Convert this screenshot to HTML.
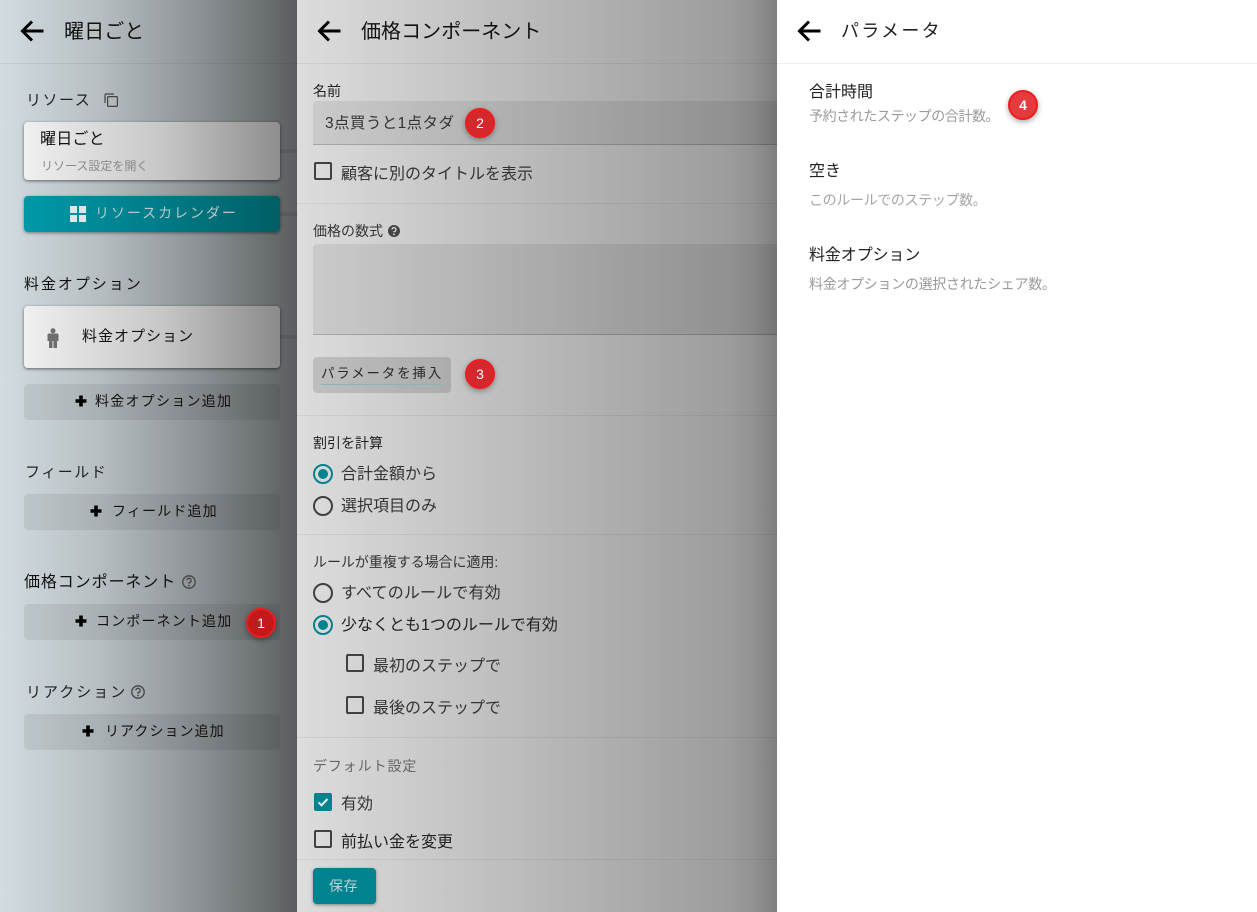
<!DOCTYPE html>
<html lang="ja"><head><meta charset="utf-8"><title>パラメータ</title>
<style>
html,body{margin:0;padding:0;width:1257px;height:912px;overflow:hidden;background:#fff}
body{font-family:"Liberation Sans","Noto Sans CJK JP",sans-serif;position:relative;color:#1a1a1a}
.p{position:absolute;top:0;height:912px;overflow:hidden}
#l{left:0;width:297px;background:linear-gradient(90deg,#d2dde1 0,#b6bec1 100px,#8c9194 200px,#5a5e60 297px)}
#m{left:297px;width:480px;background:linear-gradient(90deg,#dddddd 0,#cbcbcb 120px,#b0b0b0 300px,#9d9d9d 430px,#939393 455px,#7e7e7e 480px)}
#r{left:777px;width:480px;background:#fff}
.t{position:absolute;white-space:nowrap;line-height:1}
.h{height:1px;position:absolute;left:0;right:0;background:rgba(0,0,0,.06)}
.box{position:absolute;border-radius:4px}
.cb{position:absolute;width:14px;height:14px;border:2px solid #404040;border-radius:2px}
.ra{position:absolute;width:16px;height:16px;border:2px solid #404040;border-radius:50%}
.ra.on{border-color:#00838f}
.ra.on:after{content:"";position:absolute;left:3px;top:3px;width:10px;height:10px;background:#00838f;border-radius:50%}
.add{position:absolute;left:24px;width:256px;height:36px;border-radius:4px;background:rgba(0,0,0,.07)}
.n{position:absolute;width:26px;height:26px;border:2px solid #ee1c1c;border-radius:50%;color:#fff;font-size:14px;line-height:26px;text-align:center;box-shadow:0 2px 6px rgba(0,0,0,.35)}
.st{position:absolute;left:280px;width:17px;height:4px;background:rgba(0,0,0,.08)}
svg{position:absolute;display:block}
</style></head><body>

<div class="p" id="l">
<svg style="left:20px;top:19px" width="24" height="24" viewBox="0 0 24 24"><path d="M23.500 12H3M12 2.500L2.500 12l9.500 9.500" fill="none" stroke="#000" stroke-width="3"/></svg>
<div class="t" style="left:64px;top:22px;font-size:20px;letter-spacing:.1px;color:#111">曜日ごと</div>
<div class="h" style="top:63px"></div>
<div class="t" style="left:26px;top:93px;font-size:15px;letter-spacing:1.500px;color:#222">リソース</div>
<svg style="left:103px;top:92px" width="16" height="16" viewBox="0 0 16 16" fill="none" stroke="#444" stroke-width="1.200"><path d="M2 11V3a1 1 0 0 1 1-1h8"/><rect x="4.600" y="4.600" width="9.800" height="9.800" rx="1"/></svg>

<div class="st" style="top:149px"></div>
<div class="st" style="top:212px"></div>
<div class="st" style="top:335px"></div>

<div class="box" style="left:24px;top:122px;width:256px;height:58px;background:linear-gradient(90deg,#f0f0f0,#c6c6c6 55%,#8e8e8e);box-shadow:0 1px 3px rgba(0,0,0,.55)"></div>
<div class="t" style="left:40px;top:132px;font-size:16px;letter-spacing:.2px;color:#111">曜日ごと</div>
<div class="t" style="left:41px;top:160px;font-size:12px;color:#8a8a8a">リソース設定を開く</div>

<div class="box" style="left:24px;top:196px;width:256px;height:36px;background:linear-gradient(90deg,#0098a8,#007e8a 50%,#005e64);box-shadow:0 1px 3px rgba(0,0,0,.45)"></div>
<svg style="left:70px;top:206px" width="16" height="16" viewBox="0 0 16 16" fill="#dfe6e7"><rect width="7" height="7"/><rect x="9" width="7" height="7"/><rect y="9" width="7" height="7"/><rect x="9" y="9" width="7" height="7"/></svg>
<div class="t" style="left:95px;top:206px;font-size:14px;letter-spacing:1.950px;color:#b4c8cb">リソースカレンダー</div>

<div class="t" style="left:24px;top:277px;font-size:15px;letter-spacing:1.950px;color:#111">料金オプション</div>

<div class="box" style="left:24px;top:306px;width:256px;height:62px;background:linear-gradient(90deg,#f0f0f0,#c6c6c6 55%,#8a8a8a);box-shadow:0 1px 3px rgba(0,0,0,.55)"></div>
<svg style="left:46px;top:328px" width="14" height="20" viewBox="0 0 14 20" fill="#6d6d6d"><circle cx="7" cy="2.800" r="2.500"/><path d="M1.500 7a1.500 1.500 0 0 1 1.500-1.500h8A1.500 1.500 0 0 1 12.500 7v6h-1.500v7H7.500v-7h-1v7H3v-7H1.500z"/></svg>
<div class="t" style="left:82px;top:329px;font-size:15px;letter-spacing:1px;color:#111">料金オプション</div>

<div class="add" style="top:384px"></div>
<svg style="left:75px;top:395px" width="12" height="12" viewBox="0 0 12 12" fill="#000"><path d="M4.200 .5h3.600v3.700h3.700v3.600H7.800v3.700H4.200V7.800H.5V4.200h3.700z"/></svg>
<div class="t" style="left:95px;top:394px;font-size:14px;letter-spacing:1.250px;color:#111">料金オプション追加</div>

<div class="t" style="left:25px;top:465px;font-size:15px;letter-spacing:1.500px;color:#222">フィールド</div>
<div class="add" style="top:494px"></div>
<svg style="left:90px;top:505px" width="12" height="12" viewBox="0 0 12 12" fill="#000"><path d="M4.200 .5h3.600v3.700h3.700v3.600H7.800v3.700H4.200V7.800H.5V4.200h3.700z"/></svg>
<div class="t" style="left:112px;top:504px;font-size:14px;letter-spacing:1.150px;color:#111">フィールド追加</div>

<div class="t" style="left:24px;top:575px;font-size:16px;letter-spacing:.9px;color:#111">価格コンポーネント</div>
<svg style="left:181px;top:574px" width="16" height="16" viewBox="0 0 16 16" fill="none" stroke="#444"><circle cx="8" cy="8" r="6.200" stroke-width="1.300"/><path d="M5.800 6.300A2.200 2.200 0 1 1 8 8.700v1.100" stroke-width="1.300"/><circle cx="8" cy="11.500" r=".9" fill="#444" stroke="none"/></svg>
<div class="add" style="top:604px"></div>
<svg style="left:75px;top:615px" width="12" height="12" viewBox="0 0 12 12" fill="#000"><path d="M4.200 .5h3.600v3.700h3.700v3.600H7.800v3.700H4.200V7.800H.5V4.200h3.700z"/></svg>
<div class="t" style="left:96px;top:614px;font-size:14px;letter-spacing:1.150px;color:#111">コンポーネント追加</div>
<div class="n" style="left:246px;top:608px;background:#c3191c">1</div>

<div class="t" style="left:26px;top:685px;font-size:15px;letter-spacing:2px;color:#222">リアクション</div>
<svg style="left:130px;top:684px" width="16" height="16" viewBox="0 0 16 16" fill="none" stroke="#444"><circle cx="8" cy="8" r="6.200" stroke-width="1.300"/><path d="M5.800 6.300A2.200 2.200 0 1 1 8 8.700v1.100" stroke-width="1.300"/><circle cx="8" cy="11.500" r=".9" fill="#444" stroke="none"/></svg>
<div class="add" style="top:714px"></div>
<svg style="left:82px;top:725px" width="12" height="12" viewBox="0 0 12 12" fill="#000"><path d="M4.200 .5h3.600v3.700h3.700v3.600H7.800v3.700H4.200V7.800H.5V4.200h3.700z"/></svg>
<div class="t" style="left:105px;top:724px;font-size:14px;letter-spacing:1.050px;color:#111">リアクション追加</div>
</div>

<div class="p" id="m">
<svg style="left:20px;top:19px" width="24" height="24" viewBox="0 0 24 24"><path d="M23.500 12H3M12 2.500L2.500 12l9.500 9.500" fill="none" stroke="#000" stroke-width="3"/></svg>
<div class="t" style="left:64px;top:22px;font-size:20px;letter-spacing:.05px;color:#111">価格コンポーネント</div>
<div class="h" style="top:63px"></div>

<div class="t" style="left:16px;top:84px;font-size:14px;color:#222">名前</div>
<div style="position:absolute;left:16px;right:0;top:101px;height:43px;background:rgba(0,0,0,.07);border-bottom:1px solid rgba(0,0,0,.18);border-radius:4px 0 0 0"></div>
<div class="t" style="left:28px;top:116px;font-size:15.500px;letter-spacing:.4px;color:#333">3点買うと1点タダ</div>
<div class="n" style="left:168px;top:108px;background:#d5282c">2</div>

<div class="cb" style="left:17px;top:162px"></div>
<div class="t" style="left:44px;top:167px;font-size:16px;color:#333">顧客に別のタイトルを表示</div>
<div class="h" style="top:203px"></div>

<div class="t" style="left:16px;top:224px;font-size:14px;color:#333">価格の数式</div>
<svg style="left:90px;top:224px" width="14" height="14" viewBox="0 0 14 14"><circle cx="7" cy="7" r="6" fill="#444"/><path d="M5 5.400A2 2 0 1 1 7 7.600v.8" fill="none" stroke="#ddd" stroke-width="1.300"/><circle cx="7" cy="10.300" r=".9" fill="#ddd"/></svg>
<div style="position:absolute;left:16px;right:0;top:244px;height:90px;background:rgba(0,0,0,.07);border-bottom:1px solid rgba(0,0,0,.18);border-radius:4px 0 0 0"></div>

<div class="box" style="left:16px;top:357px;width:138px;height:36px;background:rgba(0,0,0,.13)"></div>
<div class="t" style="left:24px;top:367px;font-size:13.500px;letter-spacing:1.800px;color:#2a2a2a">パラメータを挿入</div>
<div style="position:absolute;left:24px;top:384px;width:122px;height:1px;background:#8fb2b5"></div>
<div class="n" style="left:168px;top:359px;background:#d5282c">3</div>
<div class="h" style="top:415px"></div>

<div class="t" style="left:16px;top:436px;font-size:14px;color:#222">割引を計算</div>
<div class="ra on" style="left:16px;top:464px"></div>
<div class="t" style="left:44px;top:467px;font-size:16px;color:#333">合計金額から</div>
<div class="ra" style="left:16px;top:496px"></div>
<div class="t" style="left:44px;top:499px;font-size:16px;color:#333">選択項目のみ</div>
<div class="h" style="top:534px"></div>

<div class="t" style="left:16px;top:555px;font-size:14px;letter-spacing:-.05px;color:#333">ルールが重複する場合に適用:</div>
<div class="ra" style="left:16px;top:583px"></div>
<div class="t" style="left:44px;top:586px;font-size:16px;letter-spacing:.15px;color:#333">すべてのルールで有効</div>
<div class="ra on" style="left:16px;top:615px"></div>
<div class="t" style="left:44px;top:618px;font-size:16px;color:#222">少なくとも1つのルールで有効</div>

<div class="cb" style="left:49px;top:654px"></div>
<div class="t" style="left:76px;top:659px;font-size:16px;color:#333">最初のステップで</div>
<div class="cb" style="left:49px;top:696px"></div>
<div class="t" style="left:76px;top:701px;font-size:16px;color:#333">最後のステップで</div>
<div class="h" style="top:737px"></div>

<div class="t" style="left:16px;top:759px;font-size:14px;letter-spacing:.9px;color:#666">デフォルト設定</div>
<div class="box" style="left:17px;top:793px;width:18px;height:18px;background:#00838f;border-radius:2px"></div>
<svg style="left:17px;top:793px" width="18" height="18" viewBox="0 0 18 18"><path d="M4.500 9.300l3 3 6-6.300" fill="none" stroke="#e8eeee" stroke-width="2"/></svg>
<div class="t" style="left:44px;top:797px;font-size:16px;color:#333">有効</div>
<div class="cb" style="left:17px;top:830px"></div>
<div class="t" style="left:44px;top:835px;font-size:16px;color:#222">前払い金を変更</div>
<div class="h" style="top:859px"></div>

<div class="box" style="left:16px;top:868px;width:63px;height:36px;background:#00838f;box-shadow:0 1px 3px rgba(0,0,0,.4)"></div>
<div class="t" style="left:32px;top:879px;font-size:14px;letter-spacing:.5px;color:#b8d3d6">保存</div>
</div>

<div class="p" id="r">
<svg style="left:20px;top:19px" width="24" height="24" viewBox="0 0 24 24"><path d="M23.500 12H3M12 2.500L2.500 12l9.500 9.500" fill="none" stroke="#000" stroke-width="3"/></svg>
<div class="t" style="left:64px;top:22px;font-size:18px;letter-spacing:2.300px;color:#222">パラメータ</div>
<div class="h" style="top:63px"></div>

<div class="t" style="left:32px;top:85px;font-size:16px;color:#222">合計時間</div>
<div class="t" style="left:32px;top:109px;font-size:14px;letter-spacing:-.42px;color:#9a9a9a">予約されたステップの合計数。</div>
<div class="n" style="left:231px;top:90px;background:#e53a3e;font-weight:bold">4</div>

<div class="t" style="left:32px;top:164px;font-size:16px;color:#222">空き</div>
<div class="t" style="left:32px;top:193px;font-size:14px;letter-spacing:-.35px;color:#a5a5a5">このルールでのステップ数。</div>

<div class="t" style="left:32px;top:248px;font-size:16px;letter-spacing:-.1px;color:#222">料金オプション</div>
<div class="t" style="left:32px;top:277px;font-size:14px;letter-spacing:-.3px;color:#9a9a9a">料金オプションの選択されたシェア数。</div>
</div>

</body></html>
